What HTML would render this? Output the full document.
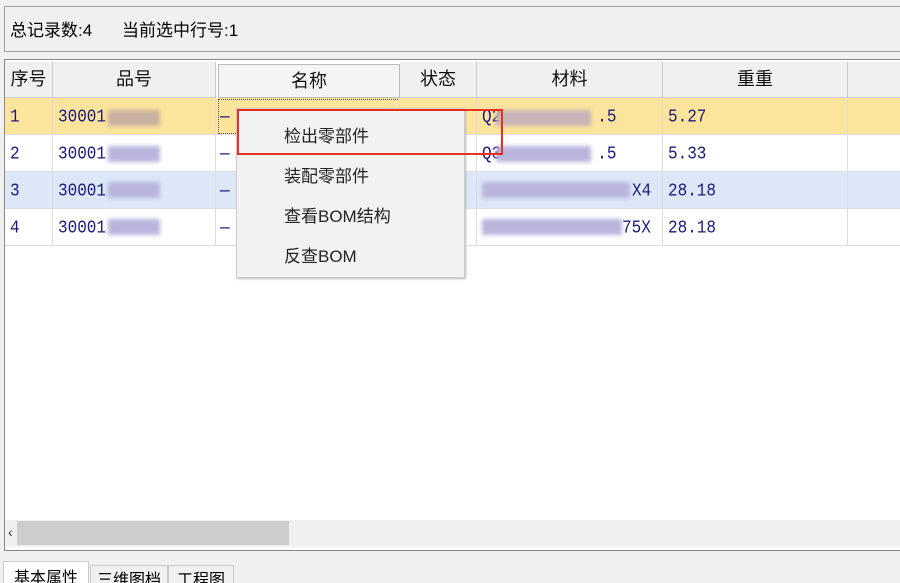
<!DOCTYPE html>
<html><head><meta charset="utf-8"><style>
html,body{margin:0;width:900px;height:583px;overflow:hidden}
body{background:#f0f0f0;position:relative;font-family:"Liberation Sans","Noto Sans CJK SC",sans-serif;}
.a{position:absolute}
.top{left:4px;top:6px;width:900px;height:44px;border:1px solid #a0a0a0;background:#f0f0f0;font-size:17px}
.grid{left:4px;top:59px;width:900px;height:490px;border:1px solid #888;background:#fff}
.hd{top:62px;height:35px;background:#f0f0f0;border-right:1px solid #ccc;border-bottom:1px solid #ccc;font-size:18px;text-align:center;line-height:35px;color:#111}
.row{left:5px;width:895px;height:36px;border-bottom:1px solid #ddd}
.c{font-family:"Liberation Mono","Noto Sans CJK SC",monospace;font-size:16px;color:#1a1a80;line-height:36px;transform:scaleY(1.15)}
.vl{width:1px;background:#ddd;top:98px;height:147px}
.bl{background:#b8b4dc;filter:blur(2px)}
.menu{left:236px;top:108px;width:227px;height:168px;background:#f2f2f2;border:1px solid #ccc;box-shadow:1px 1px 2px #bbb;font-size:17px;color:#222}
.menu div{position:absolute;left:47px}
</style></head><body>
<div class="a top"><span class="a" style="left:5px;top:9px">总记录数:4</span><span class="a" style="left:117px;top:9px">当前选中行号:1</span></div>
<div class="a grid"></div>
<div class="a hd" style="left:5px;width:47px">序号</div>
<div class="a hd" style="left:53px;width:162px">品号</div>
<div class="a hd" style="left:218px;width:180px;background:#f4f4f4;border:1px solid #bbb;top:64px;height:32px;line-height:32px">名称</div>
<div class="a hd" style="left:400px;width:76px">状态</div>
<div class="a hd" style="left:477px;width:185px">材料</div>
<div class="a hd" style="left:663px;width:184px">重重</div>
<div class="a hd" style="left:848px;width:52px"></div>
<div class="a row" style="top:98px;background:#fce49c"></div>
<div class="a row" style="top:135px;background:#fff"></div>
<div class="a row" style="top:172px;background:#dce8f8"></div>
<div class="a row" style="top:209px;background:#fff"></div>
<div class="a" style="left:218px;top:99px;width:180px;height:33px;border:1px dotted #555"></div>
<div class="a vl" style="left:52px"></div><div class="a vl" style="left:215px"></div><div class="a vl" style="left:399px"></div><div class="a vl" style="left:476px"></div><div class="a vl" style="left:662px"></div><div class="a vl" style="left:847px"></div>
<div class="a c" style="left:10px;top:99px">1</div><div class="a c" style="left:10px;top:136px">2</div><div class="a c" style="left:10px;top:173px">3</div><div class="a c" style="left:10px;top:210px">4</div>
<div class="a c" style="left:58px;top:99px">30001</div><div class="a c" style="left:58px;top:136px">30001</div><div class="a c" style="left:58px;top:173px">30001</div><div class="a c" style="left:58px;top:210px">30001</div>
<div class="a bl" style="left:108px;top:110px;width:52px;height:16px;background:#c8b0a0"></div>
<div class="a bl" style="left:108px;top:146px;width:52px;height:16px"></div>
<div class="a bl" style="left:108px;top:182px;width:52px;height:16px"></div>
<div class="a bl" style="left:108px;top:219px;width:52px;height:16px"></div>
<div class="a c" style="left:220px;top:99px">—</div><div class="a c" style="left:220px;top:136px">—</div><div class="a c" style="left:220px;top:173px">—</div><div class="a c" style="left:220px;top:210px">—</div>
<div class="a c" style="left:482px;top:99px">Q2&nbsp;&nbsp;&nbsp;&nbsp;&nbsp;&nbsp;&nbsp;&nbsp;&nbsp;&nbsp;.5</div>
<div class="a c" style="left:482px;top:136px">Q3&nbsp;&nbsp;&nbsp;&nbsp;&nbsp;&nbsp;&nbsp;&nbsp;&nbsp;&nbsp;.5</div>
<div class="a c" style="left:632px;top:173px">X4</div><div class="a c" style="left:622px;top:210px">75X</div>
<div class="a bl" style="left:496px;top:110px;width:95px;height:16px;background:#c8b4b8"></div>
<div class="a bl" style="left:496px;top:146px;width:95px;height:16px"></div>
<div class="a bl" style="left:482px;top:182px;width:148px;height:16px"></div>
<div class="a bl" style="left:482px;top:219px;width:140px;height:16px"></div>
<div class="a c" style="left:668px;top:99px">5.27</div><div class="a c" style="left:668px;top:136px">5.33</div><div class="a c" style="left:668px;top:173px">28.18</div><div class="a c" style="left:668px;top:210px">28.18</div>
<div class="a menu"><div style="top:13px">检出零部件</div><div style="top:53px">装配零部件</div><div style="top:93px">查看BOM结构</div><div style="top:133px">反查BOM</div></div>
<div class="a" style="left:237px;top:109px;width:262px;height:42px;border:2px solid #e83020"></div>
<div class="a" style="left:5px;top:520px;width:895px;height:27px;background:#f0f0f0"></div>
<div class="a" style="left:8px;top:524px;font-size:14px;color:#333">‹</div>
<div class="a" style="left:17px;top:521px;width:272px;height:24px;background:#cdcdcd"></div>
<div class="a" style="left:3px;top:561px;width:84px;height:30px;background:#fff;border:1px solid #ccc;font-size:16px;line-height:34px;text-align:center">基本属性</div>
<div class="a" style="left:90px;top:565px;width:76px;height:26px;border:1px solid #ccc;font-size:16px;line-height:30px;text-align:center">三维图档</div>
<div class="a" style="left:168px;top:565px;width:64px;height:26px;border:1px solid #ccc;font-size:16px;line-height:30px;text-align:center">工程图</div>
</body></html>
